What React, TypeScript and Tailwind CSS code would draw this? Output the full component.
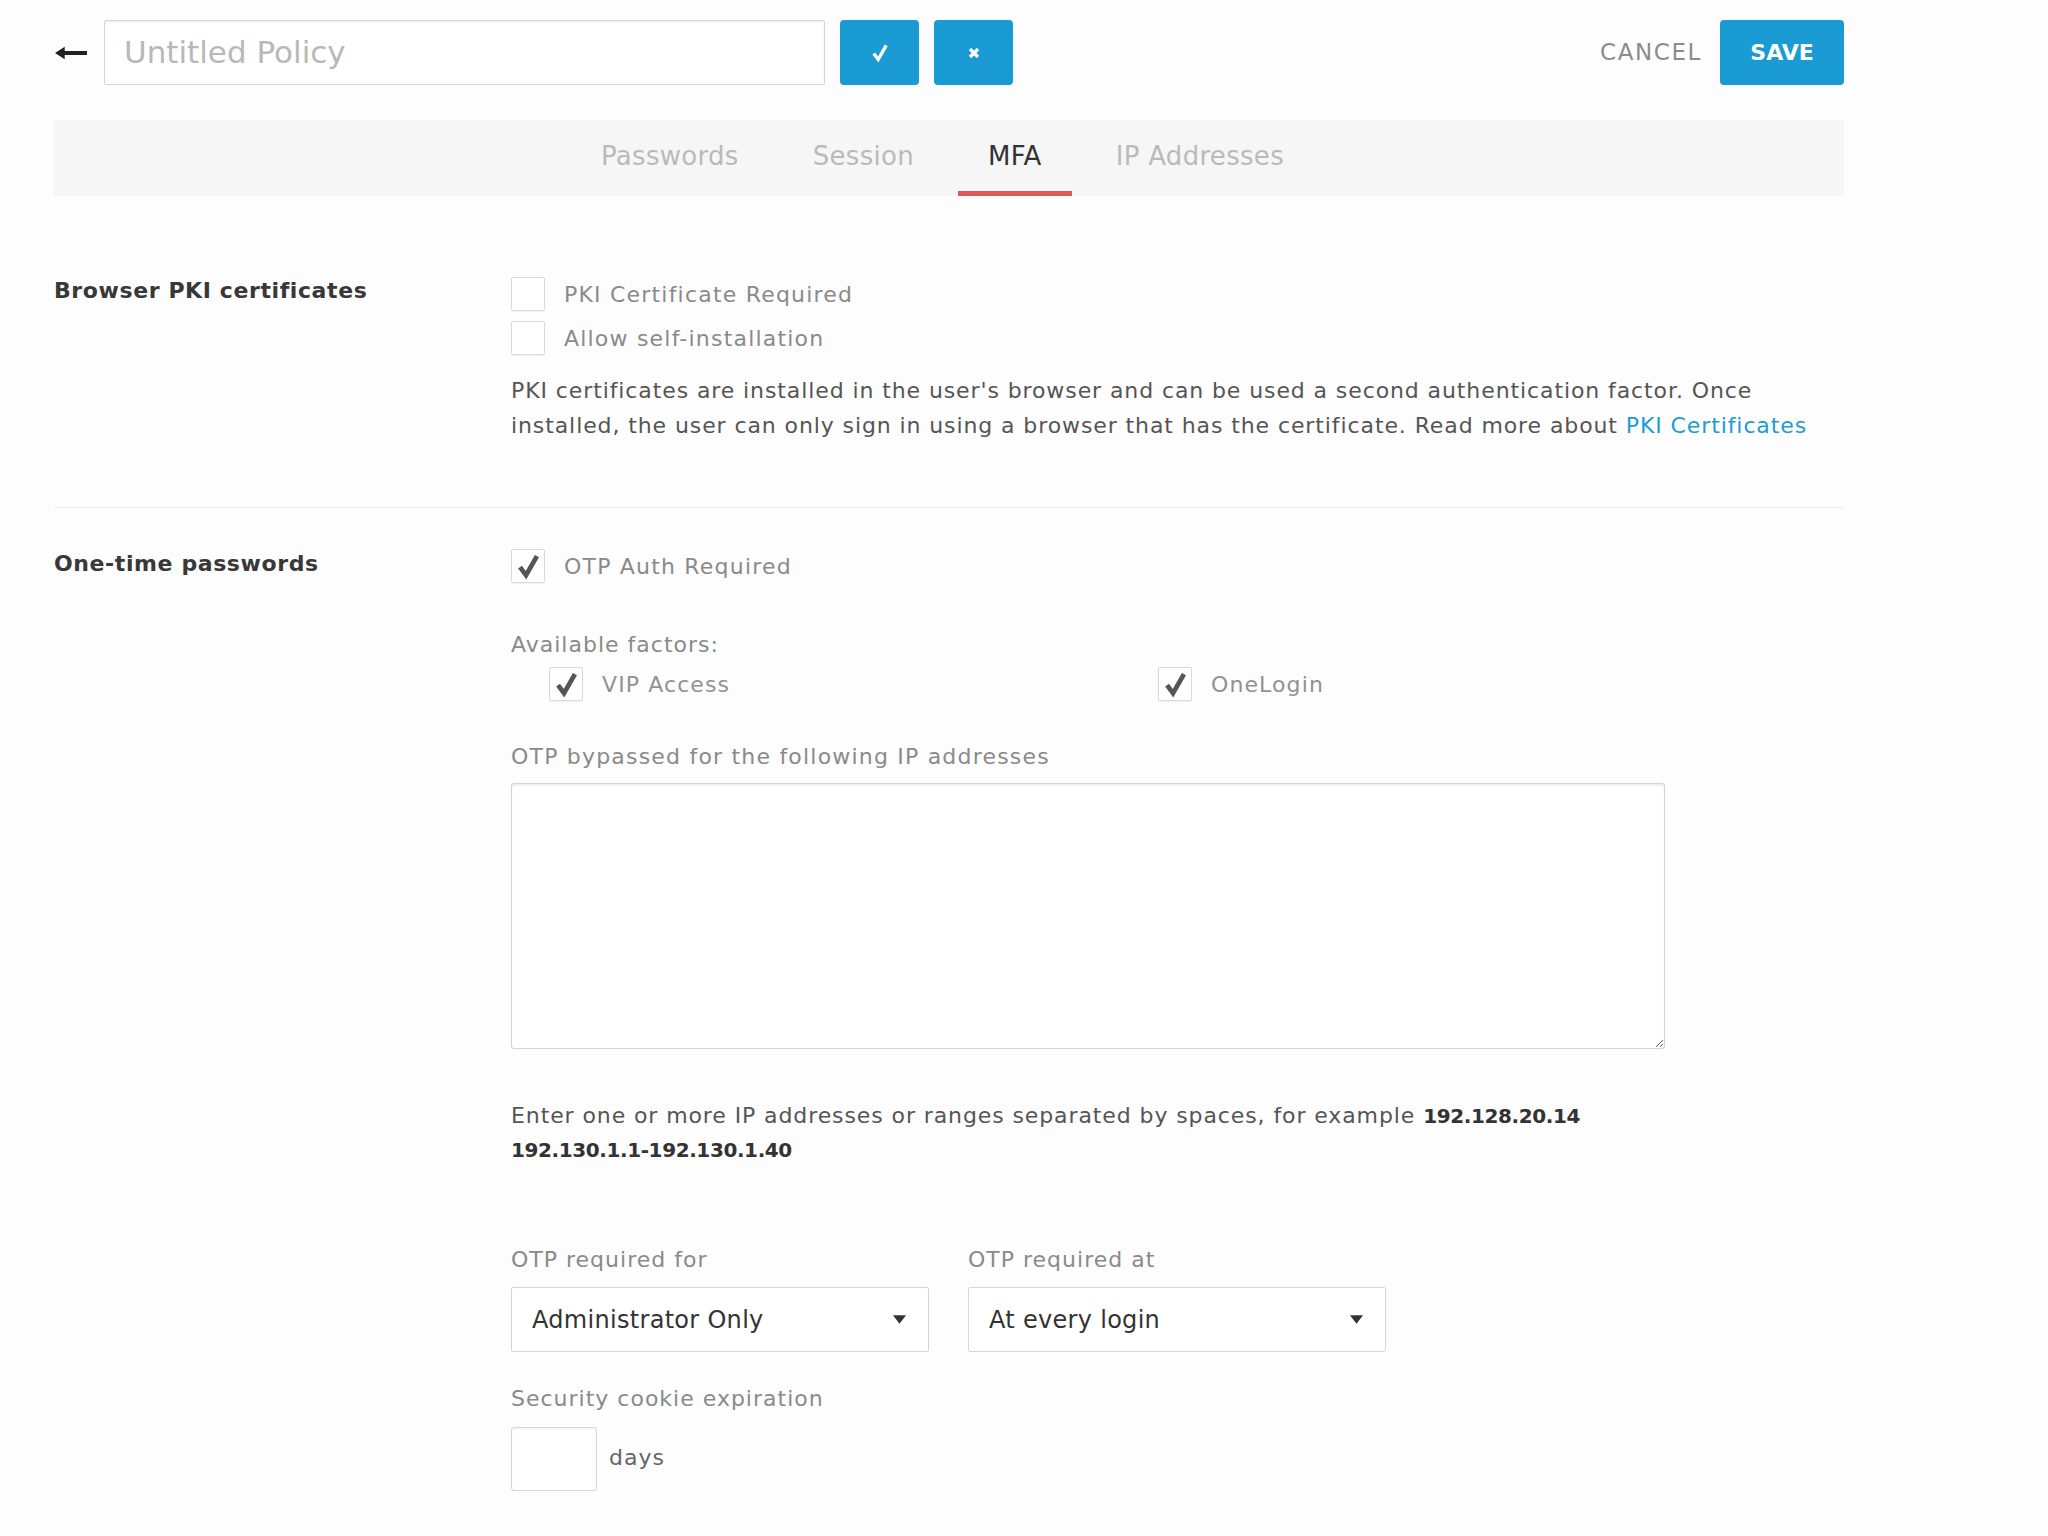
import React from "react";

function Check({ className = "", w = 3.4 }: { className?: string; w?: number }) {
  return (
    <svg viewBox="0 0 24 24" className={className} fill="none">
      <path d="M4.5 12.5 L9.8 19.8 L19.5 2.8" stroke="currentColor" strokeWidth={w} strokeLinecap="butt" strokeLinejoin="miter" />
    </svg>
  );
}

function Box({ checked }: { checked?: boolean }) {
  return (
    <div className="w-[34px] h-[34px] shrink-0 border border-[#dadada] rounded-[2px] bg-white shadow-[0_1px_1px_rgba(0,0,0,0.05)] flex items-center justify-center text-[#555]">
      {checked && <Check className="w-[27px] h-[27px]" w={4.2} />}
    </div>
  );
}

function Caret() {
  return (
    <svg viewBox="0 0 12 8" className="w-[13px] h-[9px] text-[#333]">
      <path d="M0 0 H12 L6 8 Z" fill="currentColor" />
    </svg>
  );
}

export default function App() {
  return (
    <div className="min-h-screen w-full bg-[#fdfdfd] font-['DejaVu_Sans',sans-serif] text-[#333]">
      <div className="ml-[54px] w-[1790px] pt-[20px]">
        {/* header */}
        <div className="flex items-center h-[65px]">
          <div className="w-[50px] h-full flex items-center">
            <svg viewBox="0 0 34 14" className="w-[33px] h-[14px] text-[#222] ml-[1px]">
              <path d="M0 7 L10 0.5 V5 H33 V9 H10 V13.5 Z" fill="currentColor" />
            </svg>
          </div>
          <div className="w-[721px] h-[65px] border border-[#d6d6d6] rounded-[2px] bg-white shadow-[inset_0_1px_2px_rgba(0,0,0,0.08)] flex items-center pl-[19px]">
            <span className="text-[31px] text-[#b8b8b8]">Untitled Policy</span>
          </div>
          <button className="ml-[15px] w-[79px] h-[65px] rounded-[4px] bg-[#1a9bd3] flex items-center justify-center text-white">
            <Check className="w-[20px] h-[20px]" w={4} />
          </button>
          <button className="ml-[15px] w-[79px] h-[65px] rounded-[4px] bg-[#1a9bd3] flex items-center justify-center text-white">
            <svg viewBox="0 0 12 12" className="w-[12px] h-[12px]">
              <path d="M2 2 L10 10 M10 2 L2 10" stroke="currentColor" strokeWidth="3.2" />
            </svg>
          </button>
          <div className="flex-1" />
          <span className="text-[23px] tracking-[1.6px] text-[#8c8c8c]">CANCEL</span>
          <button className="ml-[18px] w-[124px] h-[65px] rounded-[4px] bg-[#1a9bd3] text-white text-[22px] font-bold">
            SAVE
          </button>
        </div>

        {/* tabs */}
        <div className="mt-[35px] h-[76px] bg-[#f6f6f7] flex justify-center">
          <div className="flex gap-[14px] ml-[-13px]">
            <div className="px-[30px] flex items-center text-[26px] tracking-[0.3px] text-[#bababa] pb-[4px]">Passwords</div>
            <div className="px-[30px] flex items-center text-[26px] tracking-[0.3px] text-[#bababa] pb-[4px]">Session</div>
            <div className="px-[30px] flex items-center text-[26px] tracking-[0.3px] text-[#333] border-b-[5px] border-[#e05a55] pt-[2px]">MFA</div>
            <div className="px-[30px] flex items-center text-[26px] tracking-[0.3px] text-[#bababa] pb-[4px]">IP Addresses</div>
          </div>
        </div>

        {/* section 1 */}
        <div className="flex pt-[81px] pb-[64px] border-b border-[#ececec]">
          <div className="w-[457px] shrink-0 text-[22px] tracking-[0.6px] font-bold text-[#383838] leading-[28px]">Browser PKI certificates</div>
          <div className="flex-1">
            <div className="flex flex-col gap-[10px]">
              <div className="flex items-center gap-[19px]">
                <Box />
                <span className="text-[22px] tracking-[1.2px] text-[#8a8a8a]">PKI Certificate Required</span>
              </div>
              <div className="flex items-center gap-[19px]">
                <Box />
                <span className="text-[22px] tracking-[1.2px] text-[#8a8a8a]">Allow self-installation</span>
              </div>
            </div>
            <div className="mt-[18px] text-[22px] tracking-[0.9px] leading-[35px] text-[#555] w-[1320px]">
              <div>PKI certificates are installed in the user's browser and can be used a second authentication factor. Once</div>
              <div>
                installed, the user can only sign in using a browser that has the certificate. Read more about{" "}
                <span className="text-[#1b9dd0]">PKI Certificates</span>
              </div>
            </div>
          </div>
        </div>

        {/* section 2 */}
        <div className="flex pt-[41px] pb-[40px]">
          <div className="w-[457px] shrink-0 text-[22px] tracking-[0.6px] font-bold text-[#383838] leading-[28px] pt-[1px]">One-time passwords</div>
          <div className="flex-1">
            <div className="flex items-center gap-[19px]">
              <Box checked />
              <span className="text-[22px] tracking-[1.2px] text-[#8a8a8a]">OTP Auth Required</span>
            </div>

            <div className="mt-[47px] text-[22px] tracking-[1px] text-[#8a8a8a] leading-[30px]">Available factors:</div>
            <div className="mt-[7px] flex ml-[38px]">
              <div className="w-[609px] flex items-center gap-[19px]">
                <Box checked />
                <span className="text-[22px] tracking-[1.1px] text-[#929292]">VIP Access</span>
              </div>
              <div className="flex items-center gap-[19px]">
                <Box checked />
                <span className="text-[22px] tracking-[1.1px] text-[#929292]">OneLogin</span>
              </div>
            </div>

            <div className="mt-[41px] text-[22px] tracking-[1.2px] text-[#8a8a8a] leading-[30px]">OTP bypassed for the following IP addresses</div>
            <textarea className="mt-[11px] block w-[1154px] h-[266px] border border-[#d2d2d2] rounded-[3px] bg-white shadow-[inset_0_2px_2px_rgba(0,0,0,0.06)] resize-y" />

            <div className="mt-[50px] text-[22px] tracking-[0.9px] leading-[34px] text-[#555]">
              <div>
                Enter one or more IP addresses or ranges separated by spaces, for example{" "}
                <span className="font-bold text-[20px] text-[#333] tracking-[-0.4px]">192.128.20.14</span>
              </div>
              <div className="font-bold text-[20px] text-[#333] tracking-[-0.4px]">192.130.1.1-192.130.1.40</div>
            </div>

            <div className="mt-[78px] flex gap-[39px]">
              <div>
                <div className="text-[22px] tracking-[1px] text-[#8a8a8a] leading-[30px]">OTP required for</div>
                <div className="mt-[12px] w-[418px] h-[65px] border border-[#d6d6d6] rounded-[2px] bg-white flex items-center justify-between pl-[20px] pr-[22px]">
                  <span className="text-[24px] tracking-[0.3px] text-[#333]">Administrator Only</span>
                  <Caret />
                </div>
              </div>
              <div>
                <div className="text-[22px] tracking-[1px] text-[#8a8a8a] leading-[30px]">OTP required at</div>
                <div className="mt-[12px] w-[418px] h-[65px] border border-[#d6d6d6] rounded-[2px] bg-white flex items-center justify-between pl-[20px] pr-[22px]">
                  <span className="text-[24px] tracking-[0.3px] text-[#333]">At every login</span>
                  <Caret />
                </div>
              </div>
            </div>

            <div className="mt-[32px] text-[22px] tracking-[1px] text-[#8a8a8a] leading-[30px]">Security cookie expiration</div>
            <div className="mt-[13px] flex items-center gap-[12px]">
              <div className="w-[86px] h-[64px] border border-[#d6d6d6] rounded-[3px] bg-white shadow-[inset_0_1px_2px_rgba(0,0,0,0.06)]" />
              <span className="text-[22px] tracking-[1px] text-[#666] mt-[-3px]">days</span>
            </div>
          </div>
        </div>
      </div>
    </div>
  );
}
